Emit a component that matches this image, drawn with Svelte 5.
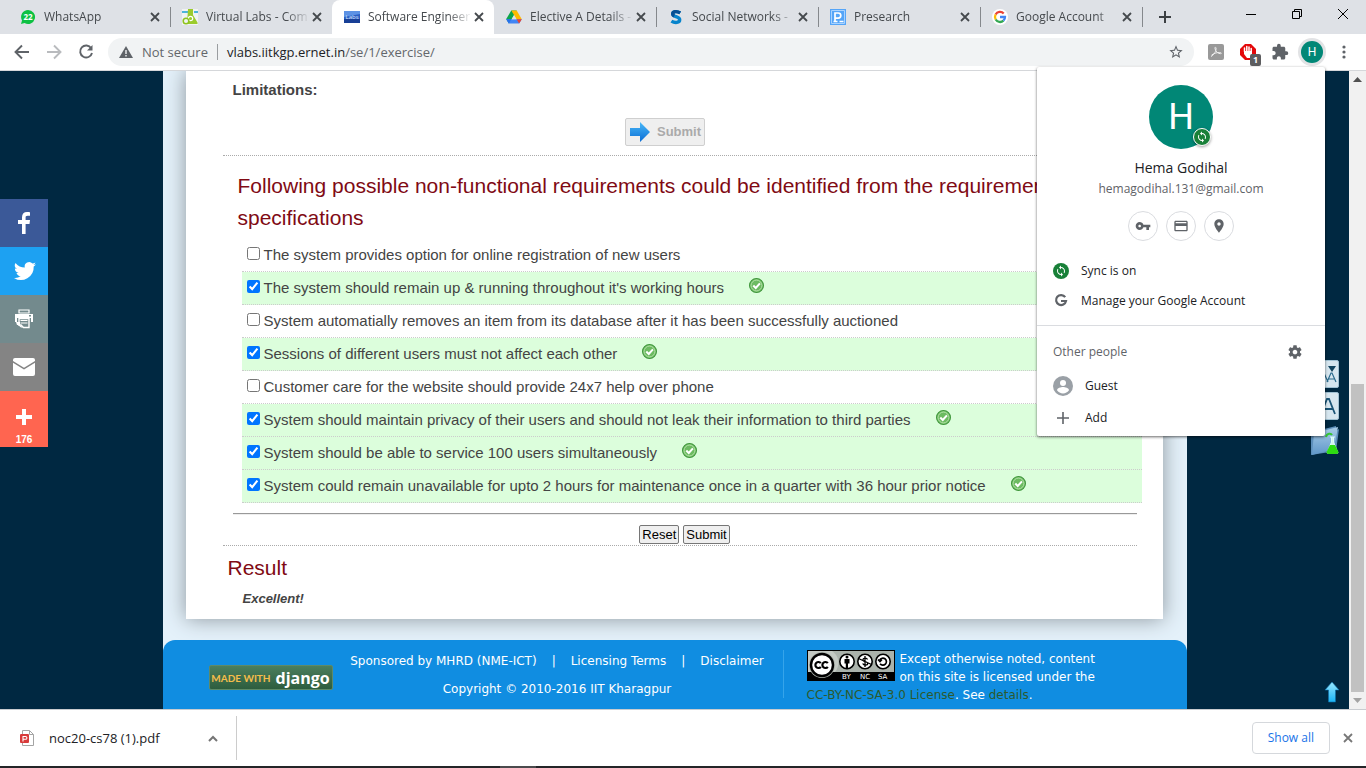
<script>
  const tabs = [
    { icon: 'whatsapp', title: 'WhatsApp' },
    { icon: 'flask', title: 'Virtual Labs - Com' },
    { icon: 'labs', title: 'Software Engineer' },
    { icon: 'drive', title: 'Elective A Details -' },
    { icon: 'swayam', title: 'Social Networks -' },
    { icon: 'presearch', title: 'Presearch' },
    { icon: 'google', title: 'Google Account' }
  ];
  const activeTab = 'labs';

  let requirements = $state([
    { text: 'The system provides option for online registration of new users', checked: false },
    { text: "The system should remain up & running throughout it's working hours", checked: true },
    { text: 'System automatially removes an item from its database after it has been successfully auctioned', checked: false },
    { text: 'Sessions of different users must not affect each other', checked: true },
    { text: 'Customer care for the website should provide 24x7 help over phone', checked: false },
    { text: 'System should maintain privacy of their users and should not leak their information to third parties', checked: true },
    { text: 'System should be able to service 100 users simultaneously', checked: true },
    { text: 'System could remain unavailable for upto 2 hours for maintenance once in a quarter with 36 hour prior notice', checked: true }
  ]);
</script>

{#snippet favicon(name)}
  <svg class="favicon" viewBox="0 0 16 16" aria-hidden="true">
    {#if name === 'whatsapp'}
      <path d="M8 1a7 7 0 1 1-3.4 13.1L1 15l1-3.5A7 7 0 0 1 8 1z" fill="#0dc143" />
      <text x="8" y="11" text-anchor="middle" font-size="8" font-weight="700" fill="#fff">22</text>
    {:else if name === 'flask'}
      <rect width="16" height="16" fill="#f1f3f2" />
      <path d="M0 2h6v2H0zM12 2h4v2h-4z" fill="#4db5d8" />
      <path d="M6 0h5v6l4.500 7.500V15H5z" fill="#9bcb2c" />
      <circle cx="8.500" cy="9.500" r="2.200" fill="none" stroke="#fff" stroke-width="1.200" />
      <circle cx="4" cy="12" r="2.800" fill="#f1f3f2" stroke="#8fc31f" stroke-width="1.500" />
    {:else if name === 'labs'}
      <rect y="2" width="16" height="12" fill="#2b5fc4" />
      <path d="M0 2h16v3L0 8z" fill="#5d92e4" />
      <path d="M0 10h16v4H0z" fill="#183f96" />
      <text x="8" y="10" text-anchor="middle" font-size="6" fill="#dfe8fb">Labs</text>
    {:else if name === 'drive'}
      <path d="M5.300 1.500h5.400L5.600 10.200 2.900 14.500 0.200 10z" fill="#0ea54c" />
      <path d="M5.300 1.500h5.400l5.100 8.700h-5.200z" fill="#ffba00" />
      <path d="M4.900 10.200h10.900l-2.700 4.300H2.900L.2 10.200z" fill="#4285f4" />
      <path d="M10.600 10.200h5.200l-2.700 4.300z" fill="#ea4335" />
      <path d="M0.200 10.200h5.100l-2.400 4.300z" fill="#2671e9" />
      <path d="M8 6.300l2.300 3.900H5.700z" fill="#dee1e6" />
    {:else if name === 'swayam'}
      <path d="M12.200 3.900C8.500 1.600 4.700 2.600 4.700 5c0 3.200 7 2.200 7 5.800 0 3-4.700 3.500-8.300 1.300" fill="none" stroke="#0784cc" stroke-width="3.400" />
      <path d="M12.200 3.900C8.500 1.600 4.700 2.600 4.700 5c0 .8.500 1.500 1.500 2" fill="none" stroke="#064f93" stroke-width="3.400" />
    {:else if name === 'presearch'}
      <rect width="16" height="16" fill="#55a5f8" />
      <path d="M1.500 1.500h13v13h-13z" fill="none" stroke="#a9d3ff" />
      <path d="M5 12.500V4h3.200a2.600 2.600 0 0 1 0 5.200H5M3.500 12.500h4M9.500 12.500h4" fill="none" stroke="#fff" stroke-width="1.700" />
    {:else}
      <circle cx="8" cy="8" r="8" fill="#fff" />
      <g fill="none" stroke-width="2.300">
        <path d="M3.600 5.500A5 5 0 0 1 11.700 4.500" stroke="#ea4335" />
        <path d="M3.700 10.500a5 5 0 0 1-.1-5" stroke="#fbbc05" />
        <path d="M11.400 11.700a5 5 0 0 1-7.700-1.200" stroke="#34a853" />
        <path d="M8 8h5a5 5 0 0 1-1.600 3.700" stroke="#4285f4" />
      </g>
    {/if}
  </svg>
{/snippet}

{#snippet cross()}
  <svg class="cross" viewBox="0 0 10 10" aria-hidden="true"><path d="M1 1l8 8M9 1L1 9" /></svg>
{/snippet}

{#snippet sync()}
  <svg class="sync" viewBox="0 0 24 24" aria-hidden="true">
    <path fill="#fff" d="M12 4V1L8 5l4 4V6c3.310 0 6 2.690 6 6 0 1.010-.25 1.970-.7 2.800l1.460 1.460C19.540 15.030 20 13.570 20 12c0-4.420-3.580-8-8-8zm0 14c-3.310 0-6-2.690-6-6 0-1.010.25-1.970.7-2.800L5.240 7.740C4.460 8.970 4 10.430 4 12c0 4.420 3.580 8 8 8v3l4-4-4-4v3z" />
  </svg>
{/snippet}

<div class="browser">
  <header class="tabstrip">
    <nav class="tabs">
      {#each tabs as tab}
        <div class="tab" class:active={tab.icon === activeTab}>
          {@render favicon(tab.icon)}
          <span class="title">{tab.title}</span>
          <button class="close" aria-label="Close tab">{@render cross()}</button>
        </div>
      {/each}
      <button class="newtab" aria-label="New tab">
        <svg width="12" height="12" viewBox="0 0 12 12"><path d="M6 0v12M0 6h12" stroke="#3c4043" stroke-width="2" /></svg>
      </button>
    </nav>
    <div class="controls">
      <button aria-label="Minimize"><svg width="10" height="10" viewBox="0 0 10 10"><path d="M0 5.500h10" /></svg></button>
      <button aria-label="Restore"><svg width="10" height="10" viewBox="0 0 10 10"><path d="M.5 2.500h7v7h-7zM2.500 2.500v-2h7v7h-2" /></svg></button>
      <button aria-label="Close"><svg width="10" height="10" viewBox="0 0 10 10"><path d="M0 0l10 10M10 0L0 10" /></svg></button>
    </div>
  </header>

  <div class="toolbar">
    <button class="nav" aria-label="Back"><svg viewBox="0 0 16 16"><path d="M15 8H2M8 1.500L1.500 8 8 14.500" /></svg></button>
    <button class="nav faded" aria-label="Forward"><svg viewBox="0 0 16 16"><path d="M1 8h13M8 1.500L14.500 8 8 14.500" /></svg></button>
    <button class="nav" aria-label="Reload"><svg viewBox="0 0 16 16"><path d="M13.200 4.200A6 6 0 1 0 14 9" /><path d="M14.500 1v5.500H9z" fill="#5f6368" stroke="none" /></svg></button>
    <div class="omnibox">
      <svg width="14" height="14" viewBox="0 0 14 14"><path d="M7 1l7 12H0z" fill="#5f6368" /><path d="M7 5v4M7 10v1.500" stroke="#f1f3f4" stroke-width="1.400" /></svg>
      <span class="insecure">Not secure</span>
      <span class="url"><b>vlabs.iitkgp.ernet.in</b>/se/1/exercise/</span>
      <button class="star" aria-label="Bookmark this page">
        <svg width="16" height="16" viewBox="0 0 24 24"><path fill="#5f6368" d="M22 9.240l-7.190-.62L12 2 9.190 8.630 2 9.240l5.460 4.730L5.820 21 12 17.270 18.180 21l-1.630-7.030L22 9.240zM12 15.400l-3.760 2.270 1-4.280-3.320-2.880 4.380-.38L12 6.100l1.710 4.040 4.380.38-3.320 2.880 1 4.280L12 15.400z" /></svg>
      </button>
    </div>
    <div class="extensions">
      <button aria-label="PDF extension">
        <svg width="16" height="16" viewBox="0 0 16 16"><rect width="16" height="16" rx="2" fill="#999" /><path d="M3 12.500c3-1.500 5.500-6 5-8.500-.3-1.500-1.400-.8-1 .7.700 3 3 5 5.500 5 1.500-.1 1-1.300-1-1.200-3 0-6 1-8 2.700" fill="none" stroke="#eee" stroke-width="1" /></svg>
      </button>
      <button class="blocker" aria-label="Ad blocker">
        <svg width="16" height="16" viewBox="0 0 16 16"><path d="M5 0h6l5 5v6l-5 5H5l-5-5V5z" fill="#e4080a" /><path d="M4.500 7.500V4M6.800 7V2.500M9 7V3M11.200 8V4.500" stroke="#fff" stroke-width="1.500" stroke-linecap="round" /><path d="M4 7h8v3l-2 4H7L4 10z" fill="#fff" /></svg>
        <span class="count">1</span>
      </button>
      <button aria-label="Extensions">
        <svg width="18" height="18" viewBox="0 0 24 24"><path fill="#5f6368" d="M20.500 11H19V7c0-1.100-.9-2-2-2h-4V3.500a2.500 2.500 0 0 0-5 0V5H4c-1.100 0-1.990.9-1.990 2v3.800H3.500c1.490 0 2.700 1.210 2.700 2.700s-1.210 2.700-2.700 2.700H2V20c0 1.100.9 2 2 2h3.800v-1.500c0-1.490 1.210-2.700 2.700-2.700s2.700 1.210 2.700 2.700V22H17c1.100 0 2-.9 2-2v-4h1.500a2.500 2.500 0 0 0 0-5z" /></svg>
      </button>
      <button aria-label="Profile"><span class="avatar small">H</span></button>
    </div>
    <button class="kebab" aria-label="Menu">
      <svg width="4" height="14" viewBox="0 0 4 14" fill="#5f6368"><circle cx="2" cy="2" r="1.600" /><circle cx="2" cy="7" r="1.600" /><circle cx="2" cy="12" r="1.600" /></svg>
    </button>
  </div>

  <div class="viewport">
    <div class="page">
      <div class="container">
        <main class="paper">
          <p class="limitations">Limitations:</p>
          <div class="first-submit">
            <button disabled>
              <svg width="22" height="20" viewBox="0 0 22 20"><defs><linearGradient id="arrow" x2="0" y2="1"><stop stop-color="#49b8f8" /><stop offset="1" stop-color="#0b6dd4" /></linearGradient></defs><path d="M1 6h10V0l10 10-10 10v-6H1z" fill="url(#arrow)" /></svg>
              <span>Submit</span>
            </button>
          </div>
          <section class="question">
            <h2>Following possible non-functional requirements could be identified from the requirements specifications</h2>
            <ul>
              {#each requirements as item}
                <li class:correct={item.checked}>
                  <label><input type="checkbox" bind:checked={item.checked} />{item.text}</label>
                  {#if item.checked}
                    <svg class="tick" viewBox="0 0 14 14" aria-hidden="true"><circle cx="7" cy="7" r="6.500" fill="#7cc56f" stroke="#3f963c" /><circle cx="7" cy="7" r="5" fill="#6dbb62" stroke="#b3e0a8" stroke-width=".8" /><path d="M4 7l2.300 2.300L10.200 5" fill="none" stroke="#fff" stroke-width="1.900" /></svg>
                  {/if}
                </li>
              {/each}
            </ul>
            <hr />
            <div class="actions">
              <button>Reset</button>
              <button>Submit</button>
            </div>
          </section>
          <section class="result">
            <h2>Result</h2>
            <p>Excellent!</p>
          </section>
        </main>

        <footer>
          <div class="django"><span>MADE WITH</span><b>django</b></div>
          <div class="credits">
            <p><span>Sponsored by MHRD (NME-ICT)</span><i>|</i><a href="#licensing">Licensing Terms</a><i>|</i><a href="#disclaimer">Disclaimer</a></p>
            <p>Copyright © 2010-2016 IIT Kharagpur</p>
          </div>
          <div class="license">
            <svg class="cc" width="88" height="31" viewBox="0 0 88 31" role="img" aria-label="Creative Commons BY NC SA">
              <rect width="88" height="31" fill="#000" />
              <rect x="1" y="1" width="86" height="21" fill="#aab2ab" />
              <path d="M1 1h24a14 14 0 0 1 3 21H1z" fill="#c4cac4" />
              <circle cx="15" cy="15" r="13" fill="#abb1aa" />
              <circle cx="15" cy="15" r="11" fill="#fff" stroke="#000" stroke-width="2.400" />
              <g fill="none" stroke="#000" stroke-width="2.200"><path d="M13.800 13.200a3 3 0 1 0 0 3.600M20.800 13.200a3 3 0 1 0 0 3.600" /></g>
              <g fill="#fff" stroke="#000" stroke-width="1.600"><circle cx="40" cy="11.500" r="7.200" /><circle cx="58" cy="11.500" r="7.200" /><circle cx="76" cy="11.500" r="7.200" /></g>
              <circle cx="40" cy="7" r="1.500" /><path d="M37.500 9h5v4.500H41V18h-2.200v-4.500h-1.300z" />
              <path d="M60.500 9.500c-.8-2-4.600-1.600-4.600.4 0 2.200 4.800 1.300 4.800 3.500 0 2-4 2.200-5 .1M58 6v11M51.500 8.500l13 6" fill="none" stroke="#000" stroke-width="1.300" />
              <path d="M72.800 10a3.500 3.500 0 1 1 .3 3.700M71 9.500l2 2 2-2" fill="none" stroke="#000" stroke-width="1.700" />
              <g class="cc-label"><text x="35" y="29">BY</text><text x="53" y="29">NC</text><text x="71" y="29">SA</text></g>
            </svg>
            Except otherwise noted, content on this site is licensed under the <a href="#cc">CC-BY-NC-SA-3.0 License</a>. See <a href="#details">details</a>.
          </div>
        </footer>
      </div>
    </div>

    <aside class="share">
      <a href="#facebook" class="facebook" aria-label="Facebook"><svg viewBox="0 0 24 24"><path d="M13.600 23V12.900h3.900l.5-4h-4.400V6.600c0-1.200.4-1.900 2-1.900H18V1.200C17.500 1.100 16.300 1 15 1c-3 0-5 1.800-5 5.200v2.700H6v4h4V23z" /></svg></a>
      <a href="#twitter" class="twitter" aria-label="Twitter"><svg viewBox="-1 0 24 24"><path d="M23 5.200a9 9 0 0 1-2.600.7 4.500 4.500 0 0 0 2-2.500 9 9 0 0 1-2.900 1.100 4.500 4.500 0 0 0-7.700 4.100A12.800 12.800 0 0 1 2.500 3.900a4.500 4.500 0 0 0 1.400 6 4.500 4.500 0 0 1-2-.6 4.500 4.500 0 0 0 3.600 4.500 4.500 4.500 0 0 1-2 .1 4.500 4.500 0 0 0 4.200 3.100A9 9 0 0 1 1 18.900a12.800 12.800 0 0 0 19.700-11.400A9 9 0 0 0 23 5.200z" /></svg></a>
      <a href="#print" class="print" aria-label="Print"><svg viewBox="0 0 24 24"><path d="M7 3h10v3H7z" fill="none" stroke="#fff" stroke-width="1.200" /><path d="M3 7h18v8h-2v-4H5v4H3z" /><path d="M7 11.500h10v9h-5.500L9 18H7z" fill="none" stroke="#fff" stroke-width="1.400" /><path d="M8.500 13.500h7M8.500 16h7" stroke="#fff" /><path d="M4 15h4v3l3 2.500H9L6 18H5z" /><path d="M17 8h2v1.500h-2z" fill="#738a8d" /></svg></a>
      <a href="#email" class="email" aria-label="Email"><svg viewBox="0 0 24 24"><path d="M3 3h18a2 2 0 0 1 2 2v1L12 12.800 1 6V5a2 2 0 0 1 2-2z" /><path d="M1 7.800l11 6.700 11-6.700V19a2 2 0 0 1-2 2H3a2 2 0 0 1-2-2z" /></svg></a>
      <a href="#more" class="more" aria-label="More"><svg viewBox="0 0 24 24"><path d="M10 4h4v6h6v4h-6v6h-4v-6H4v-4h6z" /></svg><span>176</span></a>
    </aside>

    <aside class="tools">
      <button class="sizer" aria-label="Decrease text size"><svg width="28" height="26" viewBox="0 0 28 26"><path d="M18 5h8l-4 6z" fill="#12445f" /><path d="M17 21l4-9h1l4 9M18.500 18h6M9 21l4-9h1l4 9" fill="none" stroke="#2a6a8c" stroke-width="1.200" /></svg></button>
      <button class="sizer" aria-label="Reset text size"><svg width="28" height="26" viewBox="0 0 28 26"><path d="M11 21l6-15h2l6 15M13.500 16h9" fill="none" stroke="#1b5577" stroke-width="1.800" /></svg></button>
      <button class="folder" aria-label="Labs"><svg width="32" height="32" viewBox="0 0 32 32"><defs><linearGradient id="folder" x2="0" y2="1"><stop stop-color="#a9cde8" /><stop offset="1" stop-color="#5f97c8" /></linearGradient></defs><path d="M2 7l11-4 2 2 12-3v5l3-2-3 22-25 4z" fill="#5d8fba" /><path d="M5 9l24-6-4 22L3 31z" fill="url(#folder)" /><path d="M21 13h5M22.500 13v5L18 29h11l-4.500-11v-5" fill="#d5f3e9" stroke="#dff" /><path d="M21 21l-3.500 7q0 2 2 2h8q2 0 2-2L26 21z" fill="#2edc12" /><path d="M17 13c1-4 5-4 6-2" fill="none" stroke="#37c735" stroke-width="2" /></svg></button>
    </aside>
    <a class="to-top" href="#top" aria-label="Back to top"><svg width="16" height="22" viewBox="0 0 16 22"><defs><linearGradient id="up" x2="0" y2="1"><stop stop-color="#9be8ff" /><stop offset="1" stop-color="#19b4f5" /></linearGradient></defs><path d="M8 1l7 8h-3.500v12h-7V9H1z" fill="url(#up)" stroke="#0e6ea8" stroke-width=".6" /></svg></a>

    <div class="scrollbar">
      <svg width="9" height="5" viewBox="0 0 9 5"><path d="M0 5l4.500-5L9 5z" fill="#505050" /></svg>
      <div class="track"><div class="thumb"></div></div>
      <svg width="9" height="5" viewBox="0 0 9 5"><path d="M0 0l4.500 5L9 0z" fill="#a3a3a3" /></svg>
    </div>
  </div>

  <div class="downloads">
    <button class="file">
      <svg width="14" height="16" viewBox="0 0 14 16"><path d="M2.500 .5h7l4 4v11h-11z" fill="#fff" stroke="#a4a4a4" /><path d="M9.500 .5v4h4" fill="none" stroke="#a4a4a4" /><rect y="4" width="9" height="9" rx="1" fill="#d83b3b" /><path d="M3 11.500V6.500h2.500a1.300 1.300 0 0 1 0 2.800H3" fill="none" stroke="#fff" stroke-width="1.100" /></svg>
      <span>noc20-cs78 (1).pdf</span>
      <svg width="10" height="7" viewBox="0 0 10 7"><path d="M1 6l4-4 4 4" fill="none" stroke="#757575" stroke-width="2" /></svg>
    </button>
    <button class="show-all">Show all</button>
    <button class="close-bar" aria-label="Close downloads">{@render cross()}</button>
  </div>
  <div class="taskbar"></div>

  <div class="profile" role="dialog" aria-label="Profile">
    <div class="who">
      <div class="avatar large">H<span class="badge">{@render sync()}</span></div>
      <strong>Hema Godihal</strong>
      <span class="mail">hemagodihal.131@gmail.com</span>
      <div class="shortcuts">
        <button aria-label="Passwords"><svg viewBox="0 0 24 24"><path d="M12.650 10C11.830 7.670 9.610 6 7 6c-3.310 0-6 2.690-6 6s2.690 6 6 6c2.610 0 4.830-1.670 5.650-4H17v4h4v-4h2v-4H12.650zM7 14c-1.100 0-2-.9-2-2s.9-2 2-2 2 .9 2 2-.9 2-2 2z" /></svg></button>
        <button aria-label="Payment methods"><svg viewBox="0 0 24 24"><path d="M20 4H4c-1.110 0-1.990.89-1.990 2L2 18c0 1.110.89 2 2 2h16c1.110 0 2-.89 2-2V6c0-1.110-.89-2-2-2zm0 14H4v-6h16v6zm0-10H4V6h16v2z" /></svg></button>
        <button aria-label="Addresses"><svg viewBox="0 0 24 24"><path d="M12 2C8.130 2 5 5.130 5 9c0 5.250 7 13 7 13s7-7.750 7-13c0-3.870-3.130-7-7-7zm0 9.500c-1.380 0-2.500-1.120-2.500-2.500s1.120-2.500 2.500-2.500 2.500 1.120 2.500 2.500-1.120 2.500-2.500 2.500z" /></svg></button>
      </div>
    </div>
    <button class="row"><span class="syncdot">{@render sync()}</span>Sync is on</button>
    <button class="row"><svg width="16" height="16" viewBox="0 0 16 16"><path d="M12.200 4.200A5 5 0 1 0 13 8H8" fill="none" stroke="#5f6368" stroke-width="2.200" /></svg>Manage your Google Account</button>
    <div class="others">
      <div class="others-head"><span>Other people</span>
        <button aria-label="Manage people"><svg width="16" height="16" viewBox="0 0 24 24"><path fill="#5f6368" d="M19.430 12.980c.04-.32.07-.64.07-.98s-.03-.66-.07-.98l2.110-1.650c.19-.15.24-.42.12-.64l-2-3.460c-.12-.22-.39-.3-.61-.22l-2.490 1c-.52-.4-1.080-.73-1.690-.98l-.38-2.650C14.460 2.180 14.250 2 14 2h-4c-.25 0-.46.18-.49.42l-.38 2.650c-.61.25-1.170.59-1.690.98l-2.490-1c-.23-.09-.49 0-.61.22l-2 3.460c-.13.22-.07.49.12.64l2.110 1.650c-.04.32-.07.65-.07.98s.03.66.07.98l-2.110 1.650c-.19.15-.24.42-.12.64l2 3.460c.12.22.39.3.61.22l2.490-1c.52.4 1.080.73 1.690.98l.38 2.650c.03.24.24.42.49.42h4c.25 0 .46-.18.49-.42l.38-2.650c.61-.25 1.170-.59 1.690-.98l2.490 1c.23.09.49 0 .61-.22l2-3.460c.12-.22.07-.49-.12-.64l-2.110-1.650zM12 15.500c-1.930 0-3.500-1.570-3.500-3.500s1.570-3.500 3.500-3.500 3.500 1.570 3.500 3.500-1.570 3.500-3.500 3.500z" /></svg></button>
      </div>
      <button class="person"><svg viewBox="0 0 20 20"><circle cx="10" cy="10" r="10" fill="#9aa0a6" /><circle cx="10" cy="7" r="3" fill="#fff" /><path d="M4 14.200c0-2 4-3.100 6-3.100s6 1.100 6 3.100a7.200 7.200 0 0 1-12 0z" fill="#fff" /></svg>Guest</button>
      <button class="person"><svg viewBox="0 0 20 20"><path d="M10 4v12M4 10h12" stroke="#5f6368" stroke-width="1.600" /></svg>Add</button>
    </div>
  </div>
</div>

<style>
  :global(body) { margin: 0; }
  * { box-sizing: border-box; }
  p, h2, ul { margin: 0; padding: 0; }
  button { font: inherit; color: inherit; padding: 0; border: 0; background: none; }
  a { color: inherit; text-decoration: none; }

  .browser {
    position: relative;
    display: flex;
    flex-direction: column;
    height: 100vh;
    overflow: hidden;
    font: 12px/16px "Open Sans", sans-serif;
    color: #202124;
    background: #fff;
  }

  /* Tab strip */
  .tabstrip { display: flex; flex: none; height: 34px; background: #dee1e6; }
  .tabs { display: flex; flex: 1; min-width: 0; padding-left: 8px; }
  .tab { position: relative; display: flex; align-items: center; flex: 0 1 162px; min-width: 0; padding: 0 8px 0 12px; color: #45494d; }
  .tab:not(.active)::after { content: ""; position: absolute; right: -1px; top: 7px; width: 1px; height: 20px; background: #85888c; }
  .tab:nth-child(2)::after { display: none; }
  .tab.active { background: #fff; border-radius: 8px 8px 0 0; }
  .favicon { flex: none; width: 16px; height: 16px; }
  .title { flex: 1; min-width: 0; margin-left: 8px; overflow: hidden; white-space: nowrap; mask-image: linear-gradient(90deg, #000 80px, transparent 104px); }
  .close { display: flex; align-items: center; justify-content: center; flex: none; width: 14px; height: 16px; }
  .cross { width: 10px; height: 10px; stroke: #45494d; stroke-width: 1.800; }
  .newtab { display: flex; align-items: center; justify-content: center; width: 46px; }
  .controls { display: flex; }
  .controls button { display: flex; justify-content: center; width: 46px; padding-top: 9px; }
  .controls svg { fill: none; stroke: #000; }

  /* Toolbar */
  .toolbar { display: flex; align-items: center; flex: none; height: 37px; padding: 0 6px; border-bottom: 1px solid #d5d7da; }
  .nav { display: flex; align-items: center; justify-content: center; width: 32px; height: 28px; }
  .nav svg { width: 16px; height: 16px; fill: none; stroke: #5f6368; stroke-width: 1.900; }
  .nav.faded svg { stroke: #b9bbbe; }
  .omnibox { display: flex; align-items: center; flex: 1; min-width: 0; height: 28px; margin: 0 6px; padding: 0 10px 0 11px; border-radius: 14px; background: #f1f3f4; font-size: 13px; color: #63676b; }
  .insecure { margin-left: 9px; padding-right: 9px; border-right: 1px solid #9a9da0; }
  .url { flex: 1; margin-left: 9px; }
  .url b { font-weight: 400; color: #202124; }
  .star { display: flex; }
  .extensions { display: flex; }
  .extensions button { position: relative; display: flex; align-items: center; justify-content: center; width: 32px; height: 28px; }
  .count { position: absolute; right: 3px; bottom: 0; width: 11px; height: 12px; border-radius: 2px; background: #5d5d5f; color: #fff; font: 700 9px/12px "Open Sans", sans-serif; }
  .avatar { display: flex; align-items: center; justify-content: center; border-radius: 50%; background: #018776; color: #fff; font-family: Roboto, sans-serif; }
  .avatar.small { width: 22px; height: 22px; font-size: 12px; box-shadow: 0 0 0 3px #e2e3e5; }
  .kebab { display: flex; justify-content: center; width: 32px; }

  /* Web page */
  .viewport { position: relative; display: flex; flex: 1; min-height: 0; overflow: hidden; }
  .page { flex: 1; background: #002841; overflow: hidden; font-family: "Liberation Sans", Arial, sans-serif; }
  .container { max-width: 1024px; min-height: 100%; margin: 0 auto; display: flex; flex-direction: column; background: #e4f1fa; }
  .paper { margin: 0 24px 0 23px; padding: 8px 26px 6px 37px; background: #fff; box-shadow: 0 0 20px #8c959c; color: #444; clip-path: inset(0 -24px -21px -24px); }
  .limitations { padding-left: 10px; font-weight: 700; font-size: 15px; line-height: 22px; }
  .first-submit { display: flex; justify-content: center; padding: 17px 29px 9px 0; border-bottom: 1px dotted #aaa; }
  .first-submit button { display: flex; align-items: center; gap: 6px; height: 28px; padding: 0 3px; border: 1px solid #cfcfcf; border-radius: 2px; background: #efefef; color: #aaa; font-weight: 700; font-size: 13px; }
  h2 { font-weight: 400; font-size: 21px; line-height: 32px; color: #800a14; }
  .question { padding: 14px 0 0 10px; border-bottom: 1px dotted #aaa; }
  .question h2 { padding-left: 5px; }
  ul { margin: 5px -5px 10px 9px; list-style: none; font-size: 15px; line-height: 32px; }
  li { display: flex; border-bottom: 1px dotted #ccc; padding-left: 5px; }
  li.correct { background: #dcfedc; }
  label { display: flex; }
  input { width: 13px; height: 13px; margin: 8px 4px 0 0; accent-color: #0075ff; }
  .tick { width: 15px; height: 15px; margin: 6px 0 0 25px; }
  hr { margin: 0; border: 0; border-top: 1px solid #999; border-bottom: 1px solid #eee; }
  .actions { display: flex; justify-content: center; gap: 4px; padding: 10px 0 1px; font-size: 13px; }
  .actions button { height: 19px; padding: 0 2px; border: 1px solid #767676; border-radius: 2px; background: #efefef; color: #000; }
  .result { padding: 6px 0 0 5px; }
  .result p { padding: 4px 0 4px 15px; font: italic 700 13px/21px "Liberation Sans", Arial, sans-serif; }

  footer { display: flex; flex: 1; margin-top: 21px; padding: 10px 46px 0; border-radius: 12px 12px 0 0; background: #108de1; color: #fff; font: 12px/18px "DejaVu Sans", Verdana, sans-serif; }
  .django { display: flex; align-items: center; justify-content: center; gap: 5px; flex: none; width: 124px; height: 25px; margin: 15px 17px 0 0; border: 1px solid #5d8a68; border-radius: 2px; background: linear-gradient(#4b7e5d, #2d5d3e); color: #f5bd4b; font: 700 10px/24px Lato, sans-serif; }
  .django b { color: #fff; font: 700 16px/20px "Open Sans", sans-serif; }
  .credits { flex: none; width: 434px; height: 48px; padding: 2px 18px 0 0; border-right: 1px solid #35a4ea; text-align: center; }
  .credits p { display: flex; justify-content: center; gap: 15px; margin-bottom: 10px; }
  .credits i { font-style: normal; }
  .license { width: 300px; margin-left: 23px; }
  .license a { color: #2d5a2d; }
  .cc { float: left; margin-right: 5px; }
  .cc-label text { fill: #fff; font: 7px "DejaVu Sans", sans-serif; }

  .share { position: absolute; left: 0; top: 128px; width: 48px; }
  .share a { display: flex; flex-direction: column; align-items: center; justify-content: center; height: 48px; }
  .share svg { width: 24px; height: 24px; fill: #fff; }
  .facebook { background: #3b5998; }
  .twitter { background: #1da1f2; }
  .print { background: #738a8d; }
  .email { background: #848484; }
  .share .more { height: 56px; padding-top: 12px; gap: 5px; background: #ff6550; color: #fff; font: 700 10px/12px "Liberation Sans", Arial, sans-serif; }
  .tools { position: absolute; right: 25px; top: 289px; display: flex; flex-direction: column; align-items: flex-end; gap: 4px; }
  .tools button { display: flex; }
  .sizer { border: 1px solid #9fc0d2; border-radius: 2px; background: #d6e6ef; margin-right: 2px; }
  .to-top { position: absolute; right: 26px; bottom: 6px; display: flex; }

  .scrollbar { display: flex; flex-direction: column; align-items: center; flex: none; width: 17px; padding: 6px 0; background: #f1f1f1; }
  .track { display: flex; flex: 1; flex-direction: column; justify-content: flex-end; width: 13px; margin: 6px 0; }
  .thumb { height: 51%; background: #c1c1c1; }

  /* Download shelf */
  .downloads { display: flex; align-items: center; flex: none; height: 57px; padding-right: 13px; border-top: 1px solid #c9ccd0; }
  .file { display: flex; align-items: center; align-self: stretch; width: 237px; margin: 6px 0; padding: 0 18px 0 20px; border-right: 1px solid #ccc; }
  .file span { flex: 1; margin-left: 15px; text-align: left; font-size: 13px; }
  .show-all { height: 32px; margin-left: auto; padding: 0 15px; border: 1px solid #d5d8dc; border-radius: 4px; color: #1a73e8; font-weight: 500; }
  .close-bar { display: flex; margin-left: 13px; }
  .close-bar .cross { stroke: #777; }
  .taskbar { flex: none; height: 2px; background: linear-gradient(90deg, #242528 500px, #4b4b4d 500px 536px, #242528 536px); }

  /* Profile menu */
  .profile { position: absolute; right: 41px; top: 67px; width: 288px; height: 369px; border-radius: 2px; background: #fff; box-shadow: 0 1px 3px #0009; }
  .who { display: flex; flex-direction: column; align-items: center; padding: 18px 0 15px; }
  .avatar.large { position: relative; width: 64px; height: 64px; font-size: 36px; }
  .badge, .syncdot { display: flex; align-items: center; justify-content: center; border-radius: 50%; background: #188038; }
  .badge { position: absolute; right: 2px; bottom: 3px; width: 18px; height: 18px; border: 1px solid #fff; box-shadow: 0 1px 3px #0006; }
  .sync { width: 12px; height: 12px; }
  .syncdot { width: 16px; height: 16px; }
  .who strong { margin: 8px 0 1px; font-size: 14px; line-height: 22px; font-weight: 400; }
  .mail { line-height: 18px; color: #5f6368; }
  .shortcuts { display: flex; gap: 8px; margin-top: 13px; }
  .shortcuts button { display: flex; align-items: center; justify-content: center; width: 30px; height: 30px; border: 1px solid #dadce0; border-radius: 50%; }
  .shortcuts svg { width: 16px; height: 16px; fill: #5f6368; }
  .row { display: flex; align-items: center; gap: 12px; width: 100%; height: 30px; padding-left: 16px; }
  .others { margin-top: 9px; padding: 10px 16px 0; border-top: 1px solid #dadce0; }
  .others-head { display: flex; align-items: center; justify-content: space-between; height: 32px; padding-right: 6px; color: #5f6368; }
  .others-head button { display: flex; }
  .person { display: flex; align-items: center; gap: 12px; height: 32px; margin-top: 2px; }
  .person + .person { margin-top: 0; }
  .person svg { width: 20px; height: 20px; }
</style>
